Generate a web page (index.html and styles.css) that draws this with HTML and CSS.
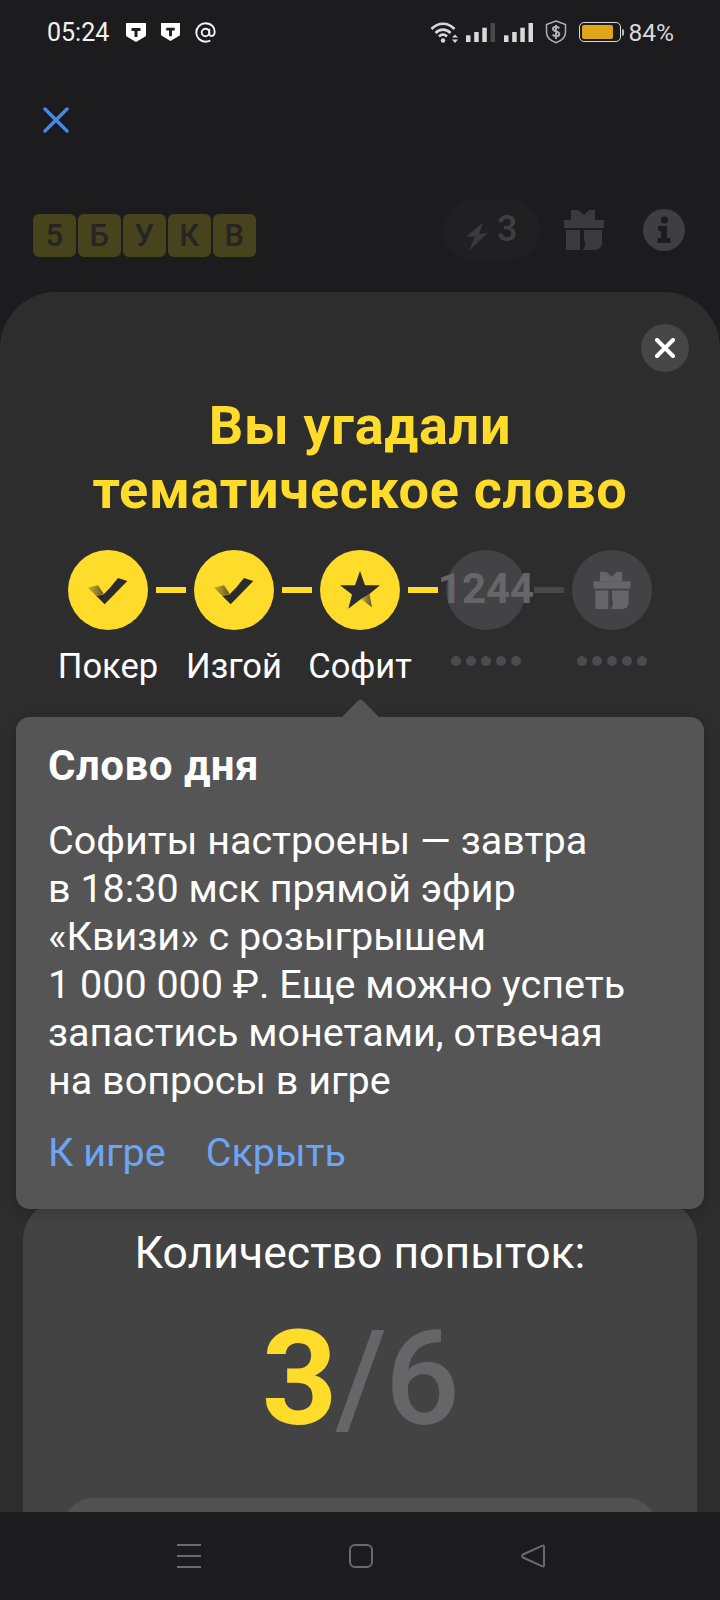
FILE: index.html
```html
<!DOCTYPE html>
<html lang="ru">
<head>
<meta charset="utf-8">
<title>5 букв</title>
<link rel="stylesheet" href="styles.css">
</head>
<body>
<svg class="sprites" aria-hidden="true">
  <defs>
    <linearGradient id="fade" x1="0" y1="0" x2="1" y2="0">
      <stop offset="0" stop-color="#2c2c2e" stop-opacity=".25"/>
      <stop offset="1" stop-color="#2c2c2e" stop-opacity=".75"/>
    </linearGradient>
    <g id="gift">
      <path d="M7 0h7l6 5 5-5h6v10H7z"/>
      <rect x="0" y="10" width="40" height="8"/>
      <path d="M2 20h14v20H2z"/>
      <path d="M20 20h18v13c0 4-3 7-7 7H19l1-2c2-3 1-6 0-9z"/>
    </g>
    <g id="check">
      <path class="shade" d="M0 9.700L10 7.300 15.700 15.700 8.300 18z"/>
      <path class="mark" d="M8.300 18L16.700 26.300 39.300 3 30 0 22 9.700 15.700 16.300z"/>
    </g>
  </defs>
</svg>
<div class="phone">
  <header class="status">
    <div class="status-left">
      <span class="clock">05:24</span>
      <svg class="ic-shield" viewBox="0 0 20 19"><path class="fw" d="M0 0h20v13l-10 6-10-6z"/><path class="fk" d="M5.500 5h9v3h-3v6h-3V8h-3z"/></svg>
      <svg class="ic-shield second" viewBox="0 0 20 19"><path class="fw" d="M0 0h20v13l-10 6-10-6z"/><path class="fk" d="M5.500 5h9v3h-3v6h-3V8h-3z"/></svg>
      <svg class="ic-at" viewBox="0 0 20 20"><circle class="sw" cx="10" cy="10" r="3.600"/><path class="sw" d="M13.600 6.500v4.800c0 2.600 4.200 2.600 4.900-.4C19.600 5.500 15.500 1.200 10 1.200 5.200 1.200 1.200 5.200 1.200 10S5.200 18.800 10 18.800c1.800 0 3.200-.4 4.600-1.200"/></svg>
    </div>
    <div class="status-right">
      <svg class="ic-wifi" viewBox="0 0 28 22"><path class="sg" d="M1.500 8C8 1 18 1 24.500 8M5.500 12c4.500-4.500 10.500-4.500 15 0M9 15.500c2.500-2.300 5.500-2.300 8 0"/><circle class="fg" cx="13" cy="19.500" r="2.200"/><path class="fg" d="M25 13.500l3 3h-6zM25 22l-3-3.500h6z"/></svg>
      <svg class="ic-bars" viewBox="0 0 29 19"><rect class="fg" x="0" y="12.300" width="4.500" height="6.700"/><rect class="fg" x="8.200" y="9" width="4.500" height="10"/><rect class="fg" x="16.300" y="4.700" width="4.500" height="14.300"/><rect class="fdim" x="24.500" y="0" width="4.500" height="19"/></svg>
      <svg class="ic-bars second" viewBox="0 0 29 19"><rect class="fg" x="0" y="12.300" width="4.500" height="6.700"/><rect class="fg" x="8.200" y="9" width="4.500" height="10"/><rect class="fg" x="16.300" y="4.700" width="4.500" height="14.300"/><rect class="fg" x="24.500" y="0" width="4.500" height="19"/></svg>
      <svg class="ic-dollar" viewBox="0 0 22 24"><path class="sthin" d="M11 1l9.500 3.500v8c0 4.800-4 8.200-9.500 10.300C5.500 20.700 1.500 17.300 1.500 12.500v-8z"/><path class="sthin2" d="M14.200 8.500c-.6-1.200-1.800-1.800-3.200-1.800-1.700 0-3 .9-3 2.300 0 3.300 6.300 1.700 6.300 5 0 1.400-1.400 2.300-3.200 2.300-1.500 0-2.800-.7-3.300-1.900M11 5v14"/></svg>
      <div class="battery"><div class="battery-body"><div class="battery-fill"></div></div><div class="battery-cap"></div></div>
      <span class="percent">84%</span>
    </div>
  </header>

  <div class="nav-row">
    <svg class="ic-x" viewBox="0 0 26 26"><path d="M2 2L24 24M24 2L2 24"/></svg>
  </div>

  <div class="game-bar">
    <div class="logo">
      <span class="tile">5</span><span class="tile">Б</span><span class="tile">У</span><span class="tile">К</span><span class="tile">В</span>
    </div>
    <div class="actions">
      <div class="energy">
        <svg class="ic-bolt" viewBox="0 0 22.300 29"><path d="M17.300 0L0 15l9-.7L3.300 28.700 22.300 11l-9 1z"/></svg>
        <span class="energy-n">3</span>
      </div>
      <svg class="ic-gift top" viewBox="0 0 40 40"><use href="#gift"/></svg>
      <svg class="ic-info" viewBox="0 0 42 42"><circle cx="21" cy="21" r="21"/><circle class="cut" cx="21.500" cy="11" r="3.500"/><path class="cut" d="M15 17h9v12h3.500v5h-13v-5H18v-7h-3z"/></svg>
    </div>
  </div>

  <main class="sheet">
    <button class="close" type="button" aria-label="Закрыть">
      <svg viewBox="0 0 20 20"><path d="M2 2l16 16M18 2L2 18"/></svg>
    </button>
    <h1 class="title">Вы угадали<br>тематическое слово</h1>

    <div class="steps">
      <div class="step">
        <div class="dot on"><svg class="ic-check" viewBox="0 0 40 27"><use href="#check"/></svg></div>
        <span class="word">Покер</span>
      </div>
      <i class="link"></i>
      <div class="step">
        <div class="dot on"><svg class="ic-check" viewBox="0 0 40 27"><use href="#check"/></svg></div>
        <span class="word">Изгой</span>
      </div>
      <i class="link"></i>
      <div class="step">
        <div class="dot on">
          <svg class="ic-star" viewBox="0 0 40 38"><path class="mark" d="M20 0L25 14.300H40L29.500 23 21 28 8.300 37.700 12 23.500 0 14.300H15z"/><path class="shade" d="M21 28L29.500 23 32 36.500z"/></svg>
        </div>
        <span class="word">Софит</span>
      </div>
      <i class="link"></i>
      <div class="step">
        <div class="dot off"><span class="count">1244</span></div>
        <span class="dots"><b></b><b></b><b></b><b></b><b></b></span>
      </div>
      <i class="link off"></i>
      <div class="step">
        <div class="dot off"><svg class="ic-gift inner" viewBox="0 0 40 40"><use href="#gift"/></svg></div>
        <span class="dots"><b></b><b></b><b></b><b></b><b></b></span>
      </div>
    </div>

    <section class="tooltip">
      <i class="tip-arrow"></i>
      <h2 class="tip-title">Слово дня</h2>
      <p class="tip-text">Софиты настроены — завтра<br>в 18:30 мск прямой эфир<br>«Квизи» с розыгрышем<br>1 000 000 ₽. Еще можно успеть<br>запастись монетами, отвечая<br>на вопросы в игре</p>
      <div class="tip-links"><a class="tip-link">К игре</a><a class="tip-link">Скрыть</a></div>
    </section>

    <section class="stats">
      <h3 class="stats-title">Количество попыток:</h3>
      <div class="score"><span class="score-now">3</span><span class="score-max">/6</span></div>
      <div class="stats-inner"></div>
    </section>
  </main>

  <footer class="navbar">
    <svg viewBox="0 0 24 24"><path d="M0 1h24M0 12h24M0 23h24"/></svg>
    <svg viewBox="0 0 24 24"><rect x="1" y="1" width="22" height="22" rx="5"/></svg>
    <svg viewBox="0 0 24 24"><path d="M23 2.500v19c0 1-.8 1.300-1.600.9L2 13.500c-1.200-.8-1.200-2.200 0-3l19.400-8.900c.8-.4 1.600 0 1.600.9z"/></svg>
  </footer>
</div>
</body>
</html>
```

FILE: styles.css
```css
* { box-sizing: border-box; }
html, body { margin: 0; padding: 0; }
body { background: #1c1c1e; font-family: Roboto, "Liberation Sans", sans-serif; }

.sprites { position: absolute; width: 0; height: 0; }

.phone {
  width: 720px;
  height: 1600px;
  background: #1c1c1e;
  display: flex;
  flex-direction: column;
  overflow: hidden;
  position: relative;
}

/* status bar */
.status {
  height: 60px;
  padding: 4px 46px 0 47px;
  display: flex;
  justify-content: space-between;
  align-items: center;
  flex: none;
  color: #f1f1f1;
}
.status-left, .status-right { display: flex; align-items: center; }
.clock { font-size: 25px; margin-right: 17px; }
.ic-shield { width: 20px; height: 19px; margin-right: 15px; }
.ic-shield.second { width: 19px; height: 18px; }
.ic-at { width: 21px; height: 21px; }
.fw { fill: #fff; }
.fk { fill: #1c1c1e; }
.sw { fill: none; stroke: #f4f4f4; stroke-width: 1.800; }
.sg { fill: none; stroke: #d9d9d9; stroke-width: 2.600; }
.fg { fill: #d9d9d9; }
.fdim { fill: #4a4a4a; }
.sthin { fill: none; stroke: #b0b0b0; stroke-width: 1.500; }
.sthin2 { fill: none; stroke: #b0b0b0; stroke-width: 2; }
.ic-wifi { width: 28px; height: 22px; margin-right: 8px; }
.ic-bars { width: 29px; height: 19px; margin-right: 9px; }
.ic-bars.second { margin-right: 12px; }
.ic-dollar { width: 22px; height: 24px; margin-right: 12px; }
.battery { display: flex; align-items: center; margin-right: 5px; }
.battery-body {
  width: 42px;
  height: 20px;
  border: 1.500px solid #d9d9d9;
  border-radius: 5px;
  padding: 2px;
}
.battery-fill { width: 31px; height: 100%; background: #e0a61a; border-radius: 2px; }
.battery-cap { width: 2px; height: 7px; background: #bbb; margin-left: 1px; border-radius: 0 2px 2px 0; }
.percent { font-size: 24.500px; color: #d9d9d9; }

/* dimmed app bar behind the sheet */
.nav-row { height: 120px; flex: none; padding: 47px 0 0 43px; }
.ic-x { width: 26px; height: 26px; display: block; }
.ic-x path { fill: none; stroke: #4a86e8; stroke-width: 3.500; stroke-linecap: round; }

.game-bar {
  height: 112px;
  flex: none;
  padding: 20px 35px 0 33px;
  display: flex;
  justify-content: space-between;
  align-items: flex-start;
}
.logo { display: flex; gap: 2.500px; margin-top: 14px; }
.tile {
  width: 42.500px;
  height: 43px;
  border-radius: 6px;
  background: #47431c;
  color: #252523;
  font-size: 31px;
  font-weight: 500;
  line-height: 43px;
  text-align: center;
}
.actions { display: flex; align-items: flex-start; }
.energy {
  width: 97px;
  height: 60px;
  border-radius: 30px;
  background: #202022;
  display: flex;
  margin-right: 24px;
  padding-left: 23px;
}
.ic-bolt { width: 22px; height: 29px; margin-top: 22px; fill: #3a3a3c; }
.energy-n { font-size: 36px; font-weight: 500; color: #3f3f41; line-height: 36px; margin: 11px 0 0 9px; }
.ic-gift.top { width: 40px; height: 40px; fill: #3a3a3c; margin: 10px 39px 0 0; }
.ic-info { width: 42px; height: 42px; fill: #3f3f41; margin-top: 9px; }
.ic-info .cut { fill: #1c1c1e; }

/* result sheet */
.sheet {
  flex: 1;
  background: #2d2d2e;
  border-radius: 56px 56px 0 0;
  position: relative;
  display: flex;
  flex-direction: column;
  align-items: center;
  min-height: 0;
}
.close {
  position: absolute;
  right: 31px;
  top: 32px;
  width: 48px;
  height: 48px;
  border: 0;
  border-radius: 50%;
  background: #464646;
  padding: 14px;
  display: block;
}
.close svg { width: 20px; height: 20px; display: block; }
.close path { fill: none; stroke: #fff; stroke-width: 4; stroke-linecap: round; }

.title {
  margin: 102px 0 0;
  font-size: 54px;
  line-height: 64px;
  font-weight: 700;
  color: #ffdb2a;
  text-align: center;
  letter-spacing: .7px;
  white-space: nowrap;
}

.steps {
  display: flex;
  align-items: flex-start;
  margin-top: 28px;
  width: 720px;
  padding-left: 68px;
}
.step { width: 80px; display: flex; flex-direction: column; align-items: center; }
.dot {
  width: 80px;
  height: 80px;
  border-radius: 50%;
  display: flex;
  align-items: center;
  justify-content: center;
  position: relative;
}
.dot.on { background: #ffdb2a; }
.dot.off { background: #434345; }
.ic-check { width: 40px; height: 27px; margin-top: 2px; }
.ic-star { width: 40px; height: 38px; margin-top: -1px; }
.ic-gift.inner { width: 38px; height: 37px; fill: #666668; }
.mark { fill: #2c2c2e; }
.shade { fill: url(#fade); }
.link { width: 30px; height: 6px; margin: 37px 8px 0; background: #ffdb2a; flex: none; }
.link.off { background: #48484a; }
.count {
  position: absolute;
  left: -10px;
  right: -10px;
  top: 14px;
  text-align: center;
  font-size: 42px;
  font-weight: 700;
  line-height: 50px;
  color: #666668;
}
.word {
  font-size: 34.500px;
  line-height: 40px;
  color: #fff;
  margin-top: 16px;
  white-space: nowrap;
}
.dots { display: flex; gap: 5px; margin-top: 26px; }
.dots b { width: 10px; height: 10px; border-radius: 50%; background: #4c4c4e; }

/* hint over the statistics card */
.tooltip {
  position: absolute;
  z-index: 2;
  left: 16px;
  right: 16px;
  top: 425px;
  height: 492px;
  background: #555556;
  border-radius: 14px;
  padding: 27px 32px 0;
  color: #fff;
  box-shadow: 0 4px 14px rgba(0,0,0,.18);
}
.tip-arrow {
  position: absolute;
  left: 330.500px;
  top: -13.500px;
  width: 27px;
  height: 27px;
  border-radius: 3px;
  background: #555556;
  transform: rotate(45deg);
}
.tip-title { margin: 0; font-size: 42px; line-height: 44px; font-weight: 700; letter-spacing: .5px; position: relative; }
.tip-text { margin: 29px 0 0; font-size: 39.500px; line-height: 48px; white-space: nowrap; }
.tip-links { display: flex; gap: 40px; margin-top: 24px; }
.tip-link { font-size: 39.500px; line-height: 48px; color: #6ea4f4; }

.stats {
  position: absolute;
  left: 23px;
  right: 23px;
  top: 908px;
  height: 400px;
  background: #434343;
  border-radius: 40px 40px 0 0;
  display: flex;
  flex-direction: column;
  align-items: center;
}
.stats-title { margin: 28px 0 0; font-size: 44.500px; line-height: 50px; font-weight: 400; color: #fff; }
.score { margin-top: 36px; font-size: 132px; line-height: 130px; letter-spacing: -2px; }
.score-now { color: #ffdb2a; font-weight: 700; }
.score-max { color: #666668; font-weight: 500; }
.stats-inner {
  position: absolute;
  left: 41px;
  right: 41px;
  top: 298px;
  height: 60px;
  border-radius: 28px 28px 0 0;
  background: #515151;
}

/* system navigation bar */
.navbar {
  position: absolute;
  z-index: 3;
  left: 0;
  right: 0;
  bottom: 0;
  height: 88px;
  background: #1c1c1e;
  padding: 32px 0 0 177px;
  display: flex;
  gap: 148px;
  align-items: flex-start;
}
.navbar svg { width: 24px; height: 24px; fill: none; stroke: #6a6a6c; stroke-width: 2; display: block; }
```
